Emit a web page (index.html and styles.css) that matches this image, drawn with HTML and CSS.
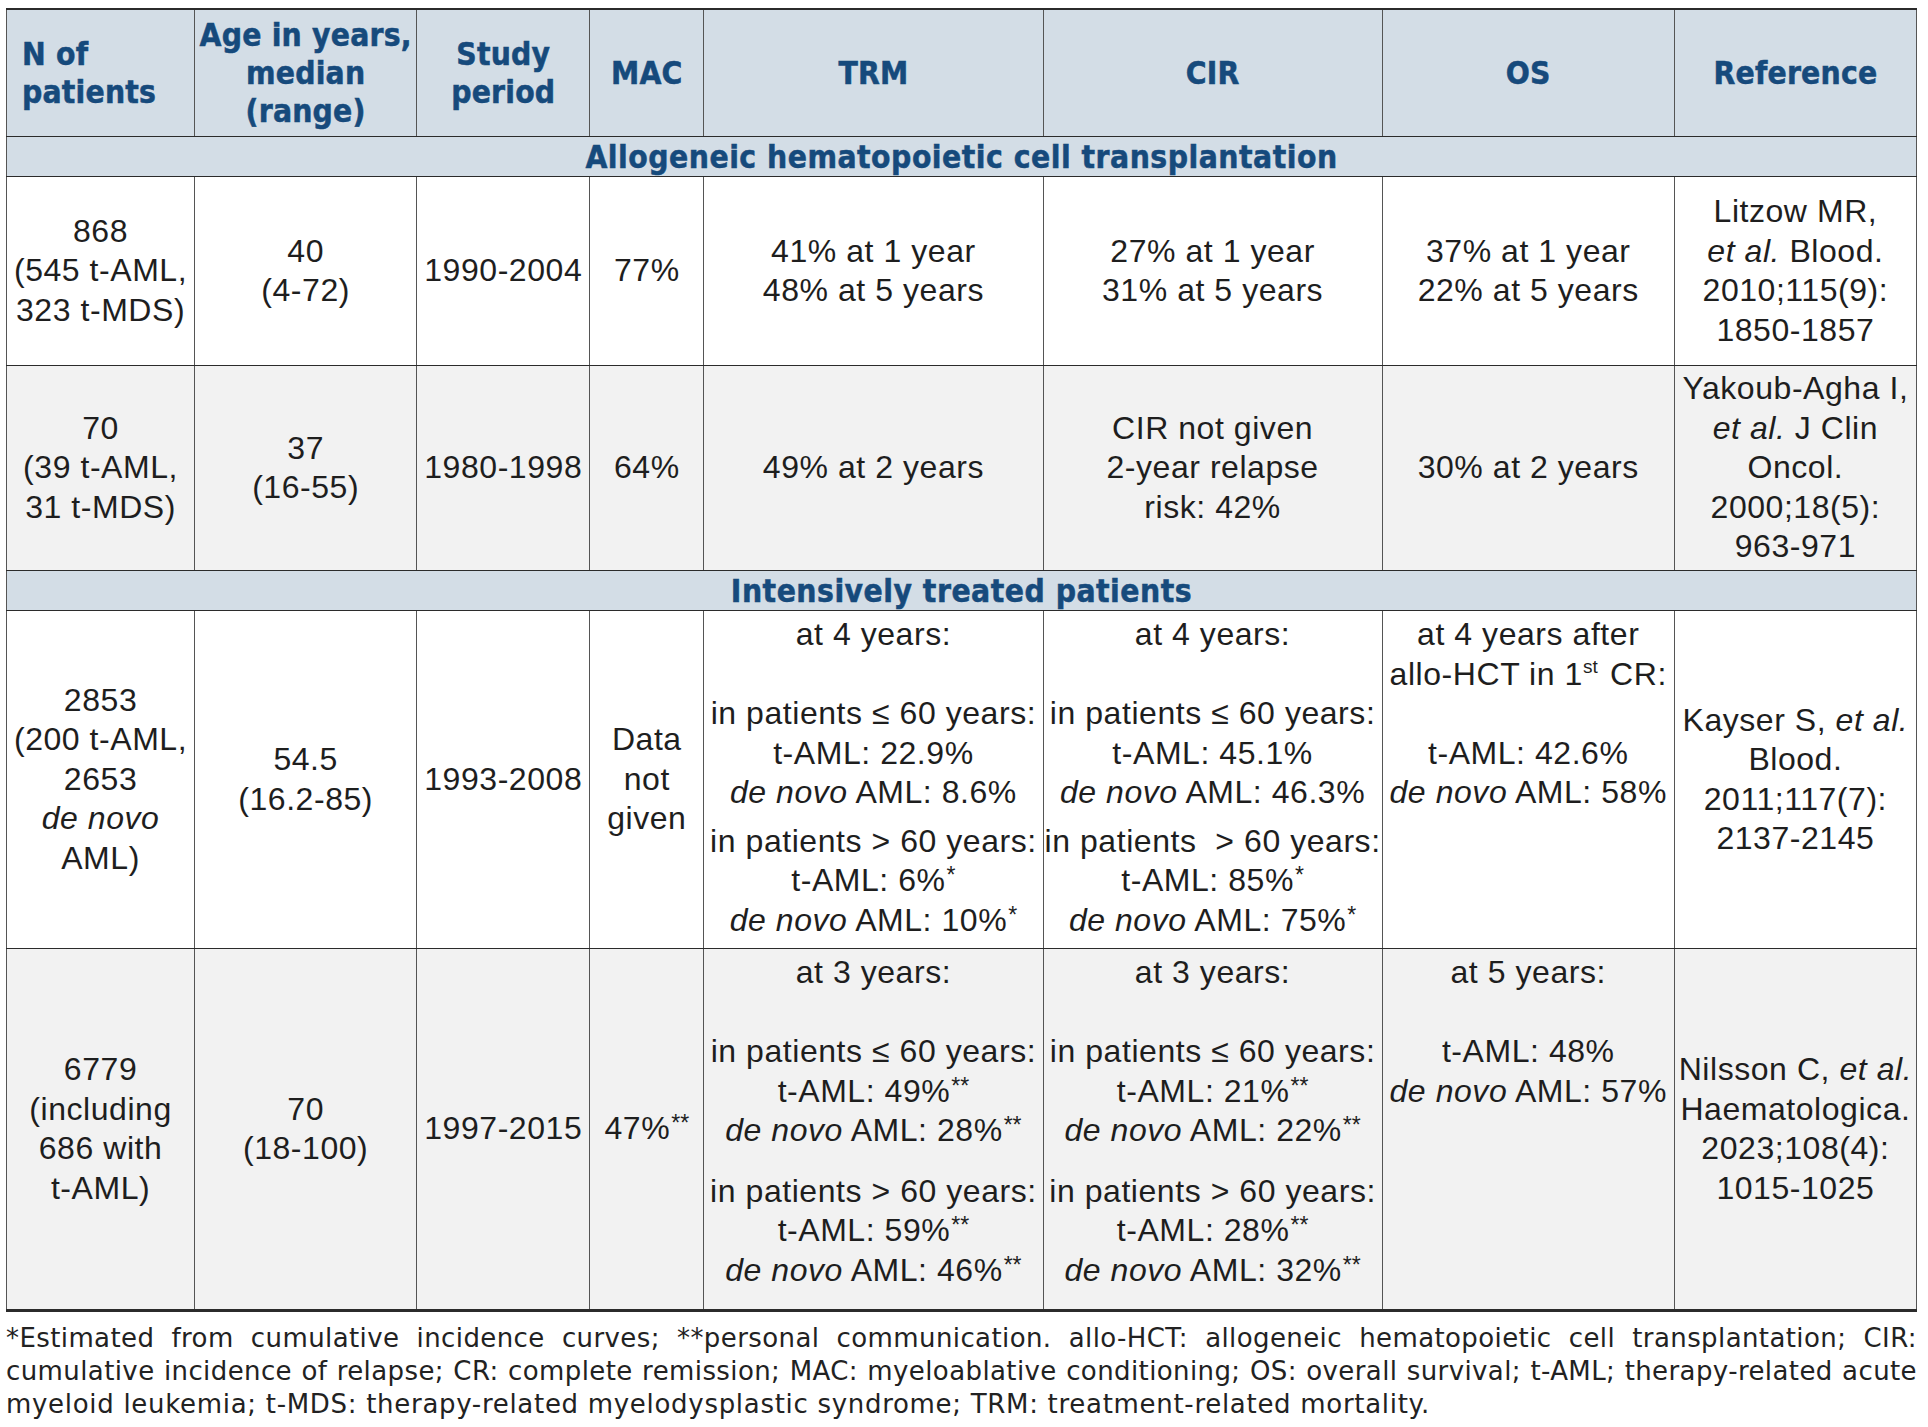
FILE: index.html
```html
<!DOCTYPE html>
<html lang="en">
<head>
<meta charset="utf-8">
<title>t-AML outcomes table</title>
<link rel="stylesheet" href="styles.css">
</head>
<body>
<div class="page">
<table class="data">
  <colgroup>
    <col class="c1"><col class="c2"><col class="c3"><col class="c4"><col class="c5"><col class="c6"><col class="c7"><col class="c8">
  </colgroup>
  <thead>
    <tr class="hdr">
      <th class="left">N of<br>patients</th>
      <th>Age in years,<br>median<br>(range)</th>
      <th>Study<br>period</th>
      <th>MAC</th>
      <th>TRM</th>
      <th>CIR</th>
      <th>OS</th>
      <th>Reference</th>
    </tr>
  </thead>
  <tbody>
    <tr class="sec"><td colspan="8">Allogeneic hematopoietic cell transplantation</td></tr>
    <tr class="r1">
      <td>868<br>(545 t-AML,<br>323 t-MDS)</td>
      <td>40<br>(4-72)</td>
      <td>1990-2004</td>
      <td>77%</td>
      <td>41% at 1 year<br>48% at 5 years</td>
      <td>27% at 1 year<br>31% at 5 years</td>
      <td>37% at 1 year<br>22% at 5 years</td>
      <td>Litzow MR,<br><i>et al.</i> Blood.<br>2010;115(9):<br>1850-1857</td>
    </tr>
    <tr class="r2 alt">
      <td>70<br>(39 t-AML,<br>31 t-MDS)</td>
      <td>37<br>(16-55)</td>
      <td>1980-1998</td>
      <td>64%</td>
      <td>49% at 2 years</td>
      <td>CIR not given<br>2-year relapse<br>risk: 42%</td>
      <td>30% at 2 years</td>
      <td>Yakoub-Agha I,<br><i>et al.</i> J Clin<br>Oncol.<br>2000;18(5):<br>963-971</td>
    </tr>
    <tr class="sec"><td colspan="8">Intensively treated patients</td></tr>
    <tr class="r3">
      <td>2853<br>(200 t-AML,<br>2653<br><i>de novo</i><br>AML)</td>
      <td>54.5<br>(16.2-85)</td>
      <td>1993-2008</td>
      <td>Data<br>not<br>given</td>
      <td class="top">
        <div>at 4 years:</div>
        <div class="blank"></div>
        <div>in patients ≤ 60 years:<br>t-AML: 22.9%<br><i>de novo</i> AML: 8.6%</div>
        <div class="gap-s">in patients &gt; 60 years:<br>t-AML: 6%<sup class="ast">*</sup><br><i>de novo</i> AML: 10%<sup class="ast">*</sup></div>
      </td>
      <td class="top">
        <div>at 4 years:</div>
        <div class="blank"></div>
        <div>in patients ≤ 60 years:<br>t-AML: 45.1%<br><i>de novo</i> AML: 46.3%</div>
        <div class="gap-s">in patients&nbsp; &gt; 60 years:<br>t-AML: 85%<sup class="ast">*</sup><br><i>de novo</i> AML: 75%<sup class="ast">*</sup></div>
      </td>
      <td class="top">
        <div>at 4 years after<br>allo-HCT in 1<sup class="ord">st</sup> CR:</div>
        <div class="blank"></div>
        <div>t-AML: 42.6%<br><i>de novo</i> AML: 58%</div>
      </td>
      <td>Kayser S, <i>et al.</i><br>Blood.<br>2011;117(7):<br>2137-2145</td>
    </tr>
    <tr class="r4 alt">
      <td>6779<br>(including<br>686 with<br>t-AML)</td>
      <td>70<br>(18-100)</td>
      <td>1997-2015</td>
      <td>47%<sup class="ast">**</sup></td>
      <td class="top">
        <div>at 3 years:</div>
        <div class="blank"></div>
        <div>in patients ≤ 60 years:<br>t-AML: 49%<sup class="ast">**</sup><br><i>de novo</i> AML: 28%<sup class="ast">**</sup></div>
        <div class="gap-l">in patients &gt; 60 years:<br>t-AML: 59%<sup class="ast">**</sup><br><i>de novo</i> AML: 46%<sup class="ast">**</sup></div>
      </td>
      <td class="top">
        <div>at 3 years:</div>
        <div class="blank"></div>
        <div>in patients ≤ 60 years:<br>t-AML: 21%<sup class="ast">**</sup><br><i>de novo</i> AML: 22%<sup class="ast">**</sup></div>
        <div class="gap-l">in patients &gt; 60 years:<br>t-AML: 28%<sup class="ast">**</sup><br><i>de novo</i> AML: 32%<sup class="ast">**</sup></div>
      </td>
      <td class="top">
        <div>at 5 years:</div>
        <div class="blank"></div>
        <div>t-AML: 48%<br><i>de novo</i> AML: 57%</div>
      </td>
      <td>Nilsson C, <i>et al.</i><br>Haematologica.<br>2023;108(4):<br>1015-1025</td>
    </tr>
  </tbody>
</table>
<div class="note">
  <span class="note-line">*Estimated from cumulative incidence curves; **personal communication. allo-HCT: allogeneic hematopoietic cell transplantation; CIR:</span>
  <span class="note-line">cumulative incidence of relapse; CR: complete remission; MAC: myeloablative conditioning; OS: overall survival; t-AML; therapy-related acute</span>
  <span class="note-line last">myeloid leukemia; t-MDS: therapy-related myelodysplastic syndrome; TRM: treatment-related mortality.</span>
</div>
</div>
</body>
</html>
```

FILE: styles.css
```css
html, body {
  margin: 0;
  padding: 0;
  background: #ffffff;
}

.page {
  padding: 8px 11px 0 6px;
}

.data {
  width: 100%;
  border-collapse: collapse;
  table-layout: fixed;
  font-family: "Liberation Sans", Arial, sans-serif;
  font-size: 32px;
  line-height: 39.5px;
  letter-spacing: 0.55px;
  color: #1e1e1e;
  border-top: 2px solid #2b2b2b;
  border-bottom: 3px solid #2b2b2b;
  border-left: 1px solid #444444;
  border-right: 1px solid #444444;
}

.c1 { width: 188px; }
.c2 { width: 222px; }
.c3 { width: 173px; }
.c4 { width: 114px; }
.c5 { width: 339px; }
.c6 { width: 339px; }
.c7 { width: 292px; }
.c8 { width: 242px; }

.data th,
.data td {
  border-left: 1px solid #555555;
  border-right: 1px solid #555555;
  border-top: 1px solid #2b2b2b;
  border-bottom: 1px solid #2b2b2b;
  padding: 0 1px;
  text-align: center;
  vertical-align: middle;
  white-space: nowrap;
}

.hdr th {
  height: 126px;
  background: #d3dde6;
  color: #164a7c;
  font-family: "DejaVu Sans Condensed", "DejaVu Sans", sans-serif;
  font-stretch: condensed;
  font-weight: 700;
  font-size: 31.5px;
  line-height: 38px;
  letter-spacing: 0.2px;
  -webkit-text-stroke: 0.5px #164a7c;
}

.hdr th.left {
  text-align: left;
  padding-left: 15px;
}

.sec td {
  height: 39px;
  background: #d3dde6;
  color: #164a7c;
  font-family: "DejaVu Sans Condensed", "DejaVu Sans", sans-serif;
  font-stretch: condensed;
  font-weight: 700;
  font-size: 31.5px;
  line-height: 36px;
  letter-spacing: 0.5px;
  -webkit-text-stroke: 0.5px #164a7c;
  padding: 0;
}

.r1 td { height: 188px; }
.r2 td { height: 204px; }
.r3 td { height: 337px; }
.r4 td { height: 360px; }

.alt td { background: #f2f2f2; }

.data td.top {
  vertical-align: top;
  padding-top: 4px;
  height: auto;
}

.blank { height: 39.5px; }
.gap-s { margin-top: 9px; }
.gap-l { margin-top: 21px; }

.data sup {
  line-height: 0;
  letter-spacing: 0;
}

.data sup.ast {
  font-size: 23px;
  vertical-align: 8px;
  margin-left: 1px;
}

.data sup.ord {
  font-size: 19px;
  vertical-align: 12px;
  margin-right: 3px;
}

.note {
  margin: 10px 0 0 0;
  font-family: "DejaVu Sans", Verdana, sans-serif;
  font-size: 26px;
  line-height: 33px;
  letter-spacing: 0.4px;
  color: #222222;
}

.note-line {
  display: block;
  text-align: justify;
  text-align-last: justify;
}

.note-line.last {
  text-align-last: left;
  letter-spacing: 0.7px;
}
```
